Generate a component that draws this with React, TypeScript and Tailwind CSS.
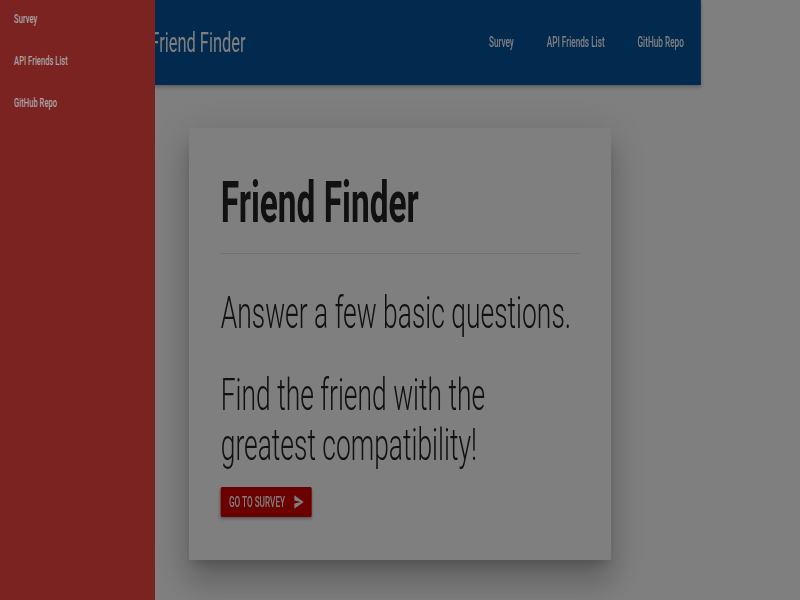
const navLinks = ["Survey", "API Friends List", "GitHub Repo"];

function SendIcon() {
  return (
    <svg viewBox="0 0 24 24" className="w-[18px] h-[18px] fill-white">
      <path d="M2.01 21L23 12 2.01 3 2 10l15 2-15 2z" />
    </svg>
  );
}

export default function App() {
  return (
    <div className="relative w-[800px] h-[600px] overflow-hidden bg-white font-['Roboto',sans-serif]">
      {/* page is drawn wide, then squeezed like the screenshot */}
      <div className="relative w-[1363px] h-[600px] origin-top-left scale-x-[0.587]">
        <nav className="flex items-center justify-between w-[1194px] h-[85px] bg-[#04549e] shadow-[0_2px_5px_rgba(0,0,0,0.3)]">
          <span className="pl-[256px] text-[28px] text-white">Friend Finder</span>
          <ul className="flex gap-[56px] pr-[29px]">
            {navLinks.map((l) => (
              <li key={l} className="text-[14px] font-medium text-white">
                {l}
              </li>
            ))}
          </ul>
        </nav>

        <main className="pl-[322px] pt-[43px]">
          <div className="w-[719px] bg-white px-[54px] pt-[44px] pb-[43px] shadow-[0_24px_38px_3px_rgba(0,0,0,0.14),0_9px_46px_8px_rgba(0,0,0,0.12),0_11px_15px_-7px_rgba(0,0,0,0.2)]">
            <h1 className="text-[57px] font-bold leading-[1.1] text-[#222]">Friend Finder</h1>
            <hr className="mt-[18px] mr-[-2px] border-t border-[#e0e0e0]" />
            <p className="mt-[34px] text-[45px] font-light leading-[1.1] text-[#222]">
              Answer a few basic questions.
            </p>
            <p className="mt-[33px] text-[45px] font-light leading-[1.1] text-[#222] pr-[90px]">
              Find the friend with the greatest compatibility!
            </p>
            <button className="mt-[18px] flex items-center gap-[14px] h-[30px] w-[155px] pl-[14px] rounded-[2px] bg-[#d60000] text-[14px] font-medium uppercase text-white shadow-[0_2px_4px_rgba(0,0,0,0.3)]">
              Go to survey
              <SendIcon />
            </button>
          </div>
        </main>

        {/* sidenav overlay */}
        <div className="absolute inset-0 bg-black/50" />
        <aside className="absolute left-0 top-0 h-full w-[264px] bg-[#7b2320]">
          <ul>
            {navLinks.map((l) => (
              <li key={l} className="flex items-center h-[42px] pb-[4px] pl-[24px] text-[13px] font-medium text-[#a8a4a4]">
                {l}
              </li>
            ))}
          </ul>
        </aside>
      </div>
    </div>
  );
}
